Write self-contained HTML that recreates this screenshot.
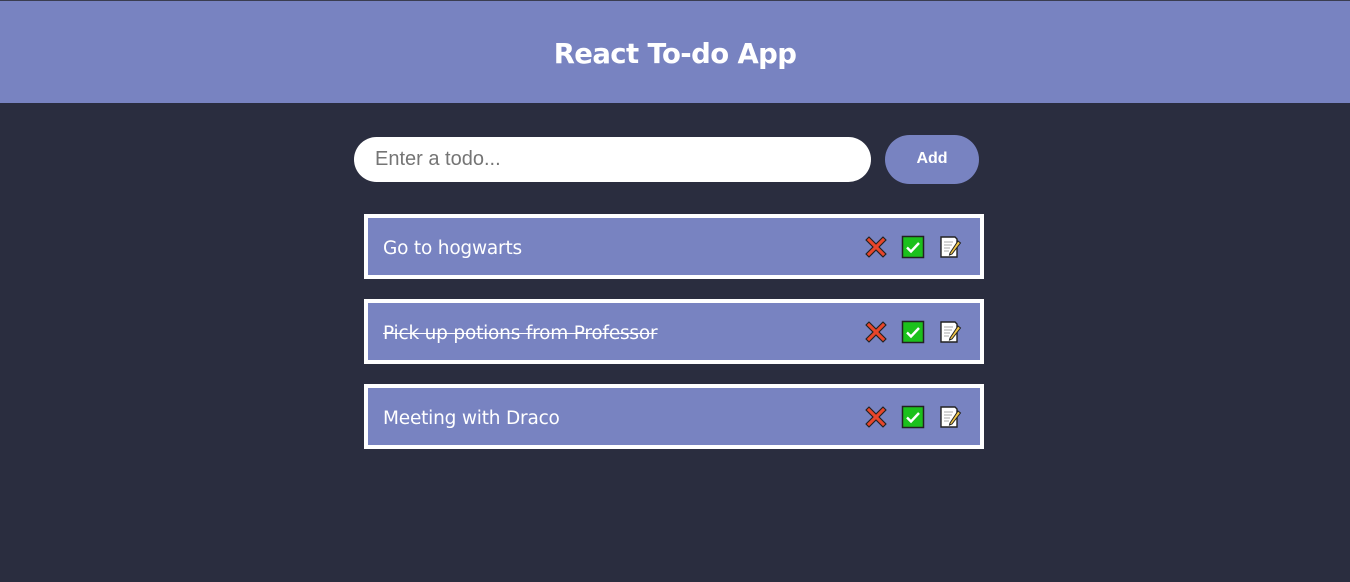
<!DOCTYPE html>
<html><head><meta charset="utf-8"><style>
body{margin:0;width:1350px;height:582px;background:#2a2d3f;font-family:"Liberation Sans",sans-serif;overflow:hidden;position:relative}
.hdr{position:absolute;left:0;top:0;width:1350px;height:103px;background:#7883c1;border-top:1px solid #3a3d50;box-sizing:border-box}
.hdr h1{margin:0;text-align:center;line-height:106px;font-size:27.5px;color:#fff;font-weight:bold;font-family:"DejaVu Sans","Liberation Sans",sans-serif;letter-spacing:-0.6px}
.inp{position:absolute;left:354px;top:137px;width:517px;height:45px;background:#fff;border-radius:23px;box-sizing:border-box;padding-left:21px;line-height:45px;font-size:20px;color:#757575}
.btn{position:absolute;left:885px;top:135px;width:94px;height:49px;background:#7883c1;border-radius:25px;color:#fff;font-weight:bold;font-size:16px;text-align:center;line-height:47px}
.item{position:absolute;left:364px;width:620px;height:65px;border:4px solid #fff;box-sizing:border-box;background:#7883c1;color:#fff;font-family:"DejaVu Sans","Liberation Sans",sans-serif;font-size:18.5px;line-height:61px;padding-left:15px;letter-spacing:-0.2px}
.item s{text-decoration:line-through}
.ic{position:absolute;top:17px;width:24px;height:24px}
</style></head><body>
<div class="hdr"><h1>React To-do App</h1></div>
<div class="inp">Enter a todo...</div>
<div class="btn">Add</div>

<div class="item" style="top:214px">Go to hogwarts<ICONS></div>
<div class="item" style="top:299px"><s>Pick up potions from Professor</s><ICONS></div>
<div class="item" style="top:384px">Meeting with Draco<ICONS></div>

<script>
var icons='<svg class="ic" style="left:496px" viewBox="0 0 24 24"><path d="M2 5L5 2L12 9L19 2L22 5L15 12L22 19L19 22L12 15L5 22L2 19L9 12Z" fill="#e8452a" stroke="#222" stroke-width="1.2" stroke-linejoin="round"/></svg>'+
'<svg class="ic" style="left:533px" viewBox="0 0 24 24"><rect x="1.5" y="1.5" width="21" height="21" fill="#1cc11c" stroke="#222" stroke-width="1.5"/><path d="M6 12.5L10 16.5L18 8" fill="none" stroke="#fff" stroke-width="2.4"/></svg>'+
'<svg class="ic" style="left:570px" viewBox="0 0 24 24"><path d="M3 2H17L19 4V22H3Z" fill="#fff" stroke="#222" stroke-width="1.4"/><path d="M6 7H15M6 10H14M6 13H12M6 16H11" stroke="#aaa" stroke-width="1"/><path d="M12 18L20 6L22.5 8L14 19L11.5 20Z" fill="#f3c84a" stroke="#222" stroke-width="1"/></svg>';
document.body.innerHTML=document.body.innerHTML.split('<icons></icons>').join(icons);
</script>
</body></html>
